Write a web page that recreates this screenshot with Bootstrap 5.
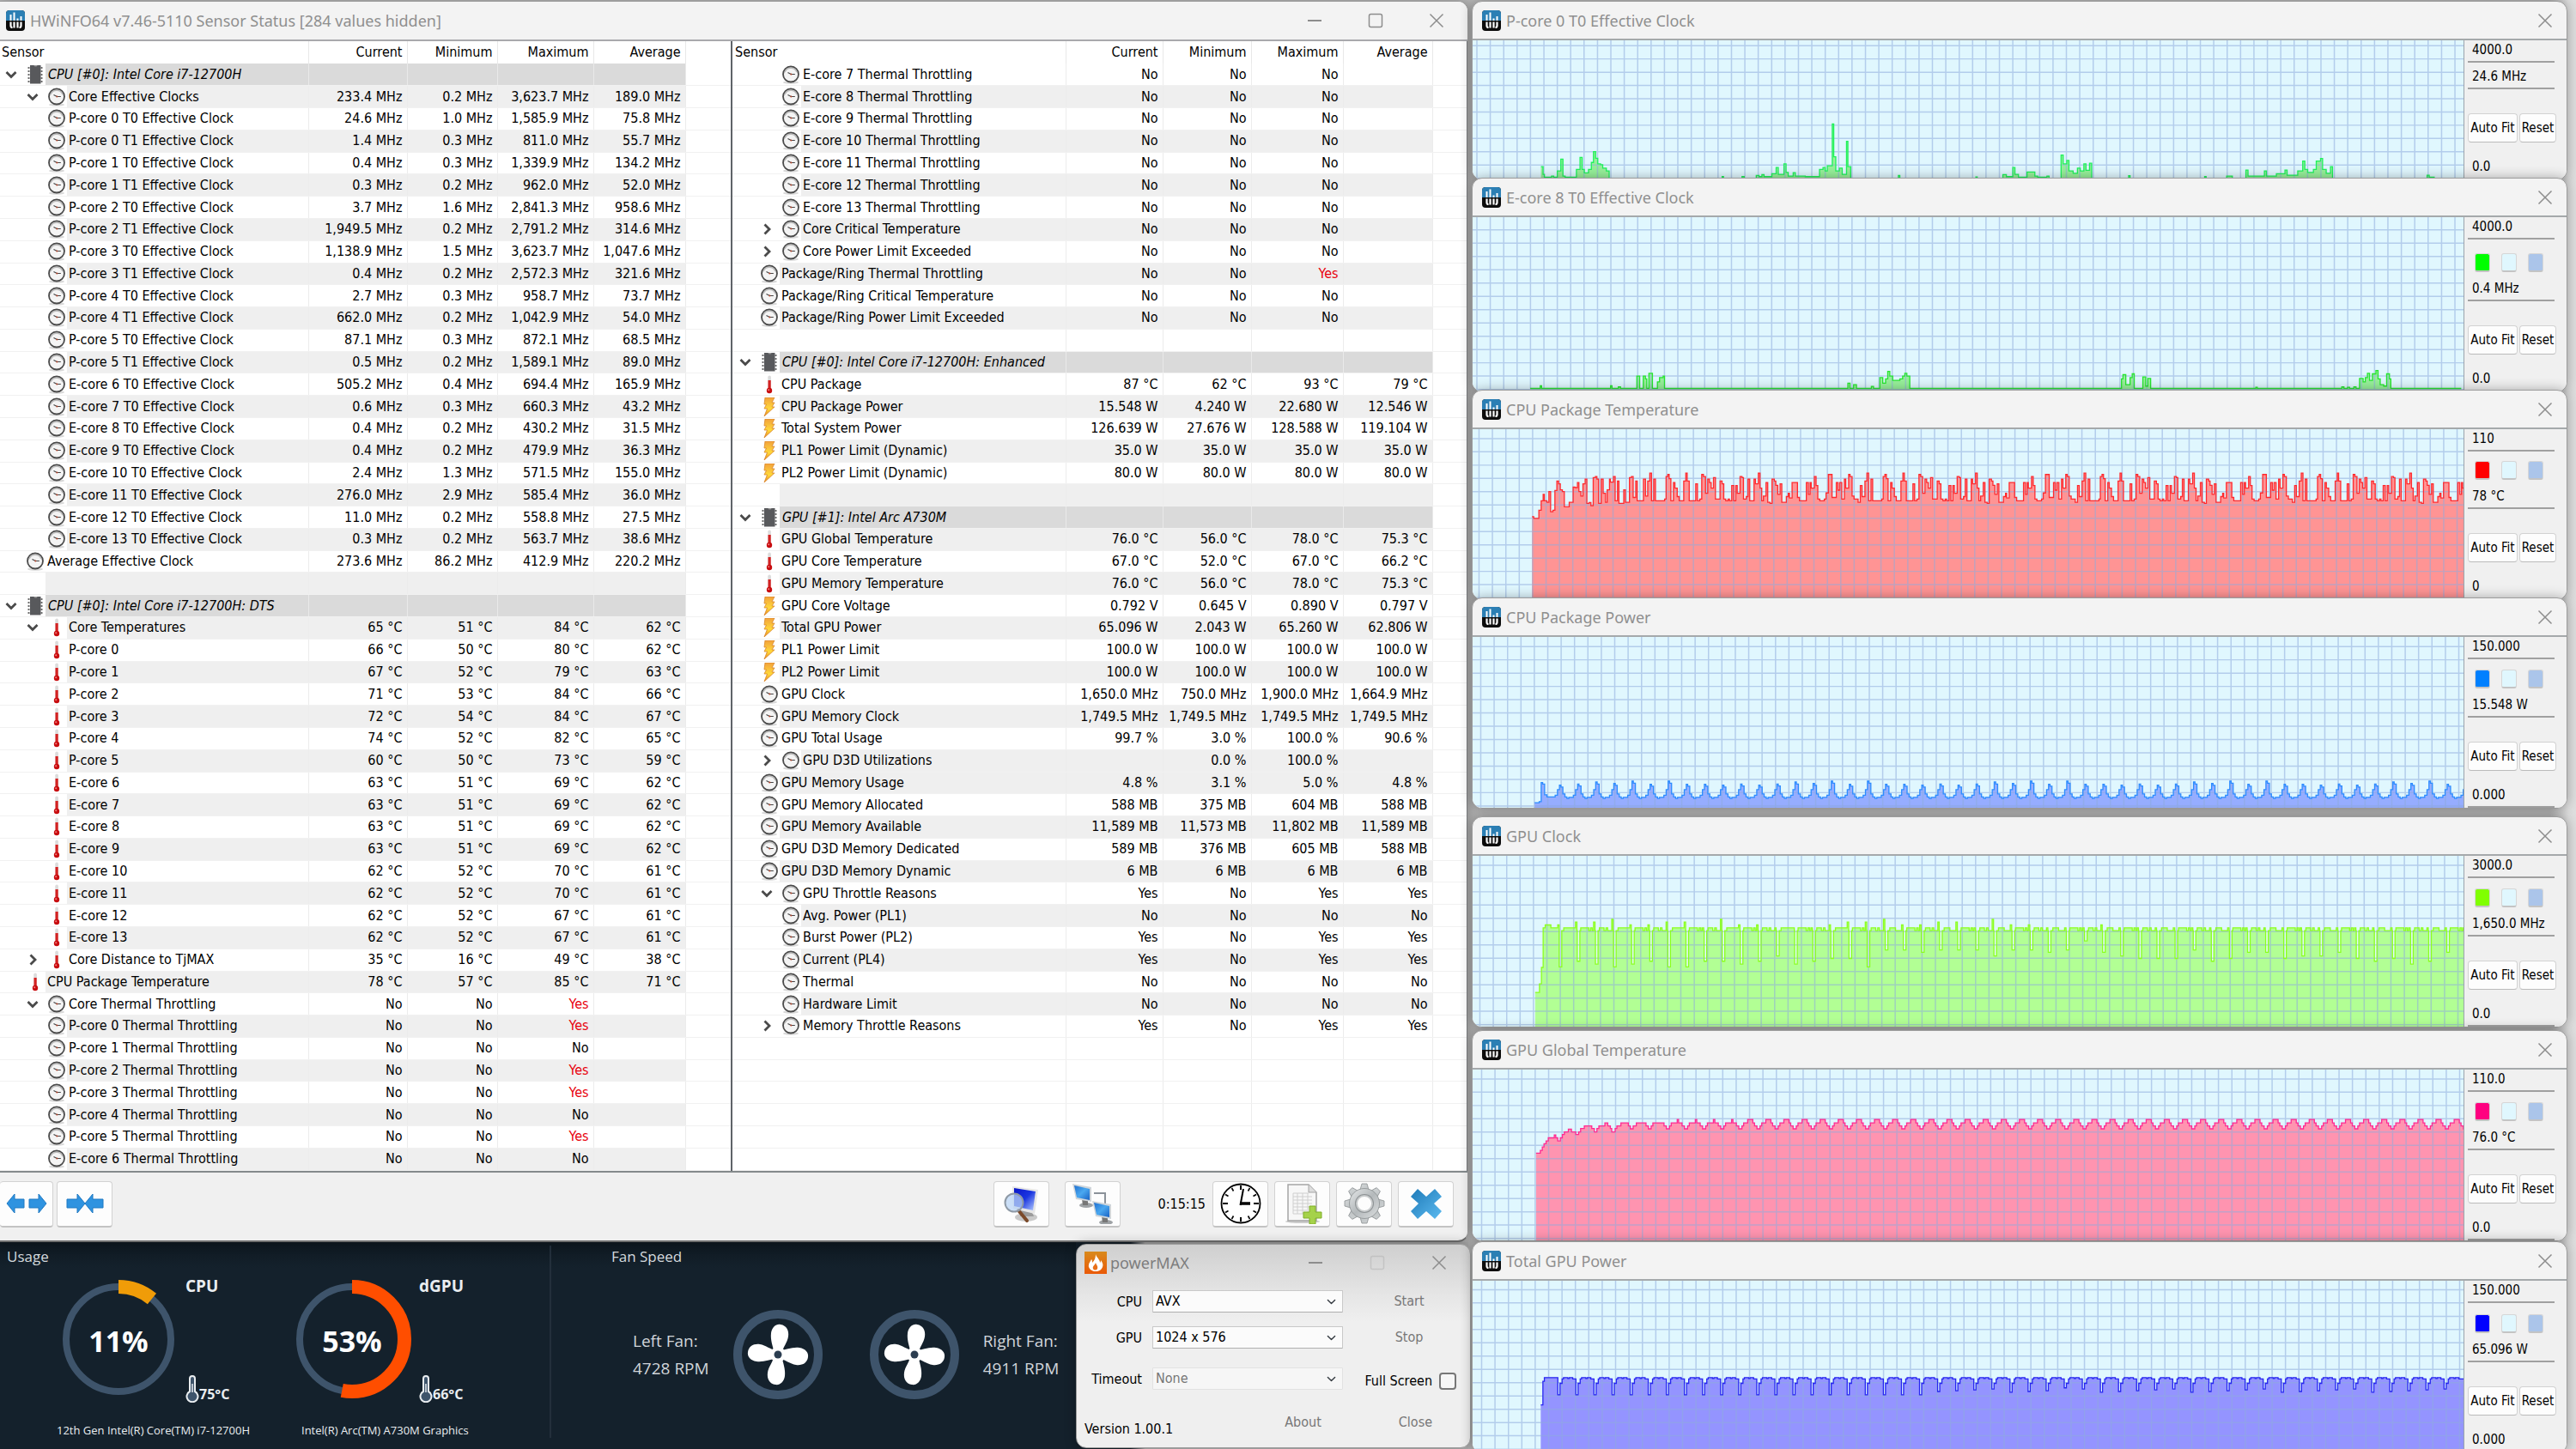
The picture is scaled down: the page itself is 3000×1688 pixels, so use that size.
<!DOCTYPE html>
<html lang="en">
<head>
<meta charset="utf-8">
<meta name="viewport" content="width=device-width, initial-scale=1">
<title>HWiNFO64 Sensor Status</title>
<link href="https://cdn.jsdelivr.net/npm/bootstrap@5.3.0/dist/css/bootstrap.min.css" rel="stylesheet">
<style>
:root{--ui:"DejaVu Sans Condensed","Noto Sans",sans-serif;--title:"Noto Sans","Open Sans",sans-serif;--row:#efefef;--head:#dadada}
body{margin:0;background:#b9b9b9;font-family:var(--ui);font-size:16px;line-height:20px;color:#000;overflow:hidden}
button{font-family:inherit}
.desk{display:grid;grid-template-columns:minmax(0,57fr) minmax(0,43fr);min-height:100vh;padding-top:1px;background:linear-gradient(90deg,#b9b9b9 0 99%,#dedede 99.7%)}
.win{background:#f3f3f3;border:1px solid #9c9c9c;border-radius:12px;overflow:hidden;position:relative;box-shadow:0 0 14px rgba(0,0,0,.3)}
.win-title{font-family:var(--title);font-size:18px;color:#8f8f8f;height:43px;padding-left:11px}
.win-title .app-logo{width:22px;height:24px;margin-right:6px}
.ctl{width:71px;height:43px;padding:0;border:0;background:none;color:#8d8d8d;display:flex;align-items:center;justify-content:center}
.ctl svg{width:18px;height:18px}
/* sensor window */
.main-win{border-left:0;border-radius:0 12px 12px 0;width:100%;background:#f0f0f0;border-bottom:2px solid #6f6f6f}
.main-win .win-title{background:#f3f3f3;padding-left:7px;height:44px}
.main-win .ctl:last-child{width:72px}
.panes{border-top:2px solid #a9a9ad;border-bottom:2px solid #848a8c;background:#fff}
.pane-l{flex:853 1 0;min-width:0}
.pane-r{flex:857 1 0;min-width:0;border-left:2px solid #5f6368;border-right:1px solid #77797c}
.sensors{width:100%;height:1316px;table-layout:fixed;border-collapse:collapse;color:#000}
.sensors th{font-weight:400;height:26px;padding:0 5px 0 0;text-align:right;border-right:1px solid #e8e8e8}
.sensors th:first-child{text-align:left;padding-left:2px}
.pane-r .sensors th:first-child{padding-left:3px}
.sensors th:last-child,.sensors td:last-child{border-right:0}
.sensors td{height:25px;padding:0 5px 0 0;text-align:right;white-space:nowrap;border-right:1px solid #ececec;border-bottom:1px solid #f1f1f1;line-height:20px}
.sensors td:first-child{text-align:left;padding:0}
.sensors .shade td:not(:last-child){background:var(--row)}
.sensors .group td:not(:last-child){background:var(--head);border-right-color:#e9e9e9}
.sensors .lv0 td:first-child{background:linear-gradient(90deg,#fff 53px,var(--c) 53px)}
.sensors .lv1 td:first-child{background:linear-gradient(90deg,#fff 78px,var(--c) 78px)}
.pane-r .sensors .lv0 td:first-child{background:linear-gradient(90deg,#fff 55px,var(--c) 55px)}
.pane-r .sensors .lv1 td:first-child{background:linear-gradient(90deg,#fff 80px,var(--c) 80px)}
.sensors tr{--c:#fff}.sensors tr.shade{--c:var(--row)}.sensors tr.group{--c:var(--head)}
.pane-r .sensors td .nm{padding-left:2px}
.nm{display:flex;align-items:center;height:24px}
.nm svg{width:20px;height:22px;flex:none}
.nm .chev{width:14px;height:14px;margin:0 11px 0 6px}
.nm .blank{width:31px;flex:none}
.nm .in{width:25px;flex:none}
.nm span{padding-left:4px}
.group .nm span{font-style:italic;padding-left:5px}
.hot{color:#e8000b}
.tools{height:79px;padding:0 16px 6px 0}
.tools .btn{width:65px;height:54px;padding:0;background:#fdfdfd;border:1px solid #d2d2d2;border-bottom:2px solid #c3c3c3;border-radius:4px}
.tools .btn.edge{width:62px;border-left:0}
.tools .right-set{gap:7px}
.tools .gap-net{margin:0 16px 0 18px}
.tools svg{width:48px;height:48px}
/* usage strip */
.strip{background:linear-gradient(90deg,transparent 77%,#b5b5b5 78%),#14202b}
.usage{background:linear-gradient(#0e1820,#14212c 30px);color:#e9edf0;font-family:"Open Sans","Noto Sans",sans-serif;height:240px;min-width:0}
.usage .half-l{flex:641 1 0;margin:4px 0 12px;border-right:2px solid #232f3b}
.usage .half-r{flex:612 1 0;margin:4px 0 12px}
.cap{font-size:17px;line-height:22px;padding-top:2px;color:#d5dade}
.gauge{margin-top:11px;padding-left:67px}
.gauge .ring{width:142px;height:142px;margin-top:3px}
.gauge .facts{font-weight:700;margin-left:7px;height:148px;min-width:123px}
.facts .who{font-size:19px;line-height:24px}
.facts .deg{font-size:16px;line-height:20px}
.facts svg{width:16px;height:32px}
.chipname{font-size:13px;line-height:18px;color:#e9edf0;white-space:nowrap;gap:60px;padding-left:66px}
.fans{margin-top:50px;padding-left:95px;gap:27px}
.fan{width:106px;height:106px;flex:none}
.fan+.fan{margin-left:26px}
.rpm{font-size:19px;line-height:32px;color:#d0d5da;white-space:nowrap}
/* powerMAX */
.pm{width:460px;flex:none;height:238px;margin-top:2px;margin-right:-3px;background:linear-gradient(#cfcfcf,#e6e6e6 60px,#efefef 90px)}
.pm .win-title{height:42px;padding-left:9px;background:none;color:#7d7d7d}
.pm .win-title svg.flame{width:26px;height:26px;margin-right:4px}
.pm .ctl{width:72px;height:42px}
.pm .fields{display:grid;grid-template-columns:76px 222px 1fr;column-gap:12px;padding:11px 16px 0 0}
.pm label{white-space:nowrap}
.pm .form-select{height:26px;padding:0 24px 0 3px;font-size:16px;line-height:22px;border-radius:1px;border:1px solid #c9c9c9;border-bottom-color:#b0b0b0;color:#000;background-color:#fbfbfb;background-size:11px 11px;background-position:right 7px center}
.pm .form-select:disabled{color:#777;background-color:#f6f6f6;border-color:#e2e2e2}
.pm .flat{border:0;background:none;padding:0;color:#777;line-height:26px}
.pm .fields .flat{margin-right:-10px}
.pm .form-check-input{width:20px;height:20px;margin:0 0 0 8px;border:2px solid #777;border-radius:4px;background:#f6f6f6}
/* graph windows */
.graphs{padding-left:4px;padding-right:10px}
.graphs .win-title .ctl{width:50px}
.plot-row{border-top:2px solid #a5a9ab;background:#f0f0f0}
.plot{flex:1 1 0;min-width:0;border-right:1px solid #9aa4ab;background:#e0f7fe}
.plot svg{display:block;width:100%;height:100%}
.side{width:119px;flex:none;padding:0 13px 0 4px}
.box{height:26px;line-height:23px;padding-left:5px;border-bottom:2px solid #a0a0a0;background:#f0f0f0;font-size:15px;white-space:nowrap;width:101px}
.sw{width:18px;height:22px;padding:0;border:1px solid #d6d6d6;border-bottom:2px solid #c4c4c4;border-radius:3px}
.sbtn{height:34px;padding:0;background:#fdfdfd;border:1px solid #d2d2d2;border-bottom-color:#bbb;border-radius:4px;font-size:15px;line-height:20px;white-space:nowrap}
</style>
</head>
<body>
<svg width="0" height="0" class="position-absolute" aria-hidden="true">
<defs>
<linearGradient id="gScr" x2="1" y2="1"><stop offset="0" stop-color="#0a16c8"/><stop offset=".5" stop-color="#1a35e0"/><stop offset="1" stop-color="#b8d0ff"/></linearGradient>
<linearGradient id="gScr2" x2="1" y2="1"><stop offset="0" stop-color="#1f6fd0"/><stop offset=".5" stop-color="#4aa8f0"/><stop offset="1" stop-color="#1a62c4"/></linearGradient>
<linearGradient id="gX" x2="1" y2="1"><stop offset="0" stop-color="#1e7ab8"/><stop offset="1" stop-color="#5cbaf0"/></linearGradient>
<linearGradient id="gGear" x2="1" y2="1"><stop offset="0" stop-color="#e6e8e9"/><stop offset=".5" stop-color="#b4b9bb"/><stop offset="1" stop-color="#dcdfe0"/></linearGradient>
<linearGradient id="gBolt" x2="0" y2="1"><stop offset="0" stop-color="#f2a13c"/><stop offset=".6" stop-color="#ffd93a"/><stop offset="1" stop-color="#e8861c"/></linearGradient>
<linearGradient id="gFire" x2="0" y2="1"><stop offset="0" stop-color="#d98a1c"/><stop offset="1" stop-color="#ea5a08"/></linearGradient>
<symbol id="i-logo" viewBox="0 0 22 24"><rect width="22" height="24" rx="4" fill="#0c0c0c"/><path d="M0 12V4a4 4 0 0 1 4-4h14a4 4 0 0 1 4 4v8z" fill="#2b7fb4"/><path d="M5.500 12V5M9.500 12V2.500M13.500 12V9.500M17.500 12V7" stroke="#fff" stroke-width="2"/><path d="M5.500 13.500v4.500a2 2 0 0 0 2 2M9.500 13.500v7M13.500 13.500v7M17.500 13.500v4.500a2 2 0 0 1-2 2" stroke="#fff" stroke-width="2.200" fill="none"/></symbol>
<symbol id="i-clock" viewBox="0 0 20 22"><ellipse cx="10" cy="20" rx="9" ry="1.800" fill="#d9d9d9"/><circle cx="10" cy="10.500" r="9" fill="#f4f4f4" stroke="#4a4a4a" stroke-width="1.800"/><path d="M3 8a7.500 7.500 0 0 1 14 0" stroke="#bbb" stroke-width="1.500" fill="none"/><path d="M6.500 8.500l3.800 2h4.500" stroke="#444" stroke-width="1.200" fill="none"/><circle cx="10.300" cy="10.500" r="1" fill="#b5472f"/></symbol>
<symbol id="i-temp" viewBox="0 0 20 22"><rect x="8.300" y=".500" width="3.600" height="17" rx="1.800" fill="#dcdcdc"/><rect x="8.500" y="6" width="3.200" height="12" fill="#d42222"/><circle cx="10" cy="18" r="3.200" fill="#c80d10"/><circle cx="9.200" cy="17.200" r="1" fill="#f08080"/></symbol>
<symbol id="i-bolt" viewBox="0 0 20 22"><path d="M5 0h11l-3 6h3l-3 5h3L4 22l3.500-9H4l2.500-5H4z" fill="url(#gBolt)" stroke="#d8842a" stroke-width=".800"/></symbol>
<symbol id="i-chip" viewBox="0 0 20 22"><path d="M1.500 3h17M1.500 7h17M1.500 11h17M1.500 15h17M1.500 19h17" stroke="#6d6d6d" stroke-width="2" stroke-dasharray="2 13 2"/><rect x="4" y="0" width="12.500" height="21.500" fill="#58595c"/><path d="M8.500 0a2 1.500 0 0 0 4 0" fill="#9a9a9a"/></symbol>
<symbol id="i-down" viewBox="0 0 14 14"><path d="M1.500 4L7 9.500 12.500 4" fill="none" stroke="#4a4a4a" stroke-width="2.800"/></symbol>
<symbol id="i-right" viewBox="0 0 14 14"><path d="M4.500 1.500L10 7l-5.500 5.500" fill="none" stroke="#4a4a4a" stroke-width="2.800"/></symbol>
<symbol id="i-x" viewBox="0 0 18 18"><path d="M1.500 1.500l15 15M16.500 1.500l-15 15" stroke="currentColor" stroke-width="1.500"/></symbol>
<symbol id="i-min" viewBox="0 0 18 18"><path d="M1 9h16" stroke="currentColor" stroke-width="1.800"/></symbol>
<symbol id="i-max" viewBox="0 0 18 18"><rect x="1.500" y="1.500" width="15" height="15" rx="2" fill="none" stroke="currentColor" stroke-width="1.500"/></symbol>
<symbol id="i-fan" viewBox="0 0 106 106"><circle cx="53" cy="53" r="47" fill="none" stroke="#3e546b" stroke-width="10"/><g fill="#fff"><path id="bl" d="M49 52C47 43 44 36 45 28c1-7 6-11 11-10 7 1 10 7 9 14-1 7-6 12-8 20z"/><use href="#bl" transform="rotate(90 53 53)"/><use href="#bl" transform="rotate(180 53 53)"/><use href="#bl" transform="rotate(270 53 53)"/><circle cx="53" cy="53" r="9"/></g><circle cx="53" cy="53" r="4.500" fill="#2b3d50"/></symbol>
<symbol id="i-therm" viewBox="0 0 16 32"><path d="M5 4a3 3 0 0 1 6 0v15a6.500 6.500 0 1 1-6 0z" fill="#3e546b" stroke="#e9edf0" stroke-width="2"/><path d="M8 10v10" stroke="#e9edf0" stroke-width="1.500"/></symbol>
</defs>
</svg>

<main class="desk">
  <div class="d-flex flex-column">
    <section class="win main-win">
      <header class="win-title d-flex align-items-center">
        <svg class="app-logo"><use href="#i-logo"/></svg><span class="me-auto">HWiNFO64 v7.46-5110 Sensor Status [284 values hidden]</span>
        <button class="ctl" aria-label="Minimize"><svg><use href="#i-min"/></svg></button>
        <button class="ctl" aria-label="Maximize"><svg><use href="#i-max"/></svg></button>
        <button class="ctl" aria-label="Close"><svg><use href="#i-x"/></svg></button>
      </header>
      <div class="panes d-flex">
        <div class="pane-l"><table class="sensors" id="sensorsLeft"><colgroup><col style="width:359px"><col style="width:115px"><col style="width:105px"><col style="width:112px"><col style="width:107px"><col></colgroup></table></div>
        <div class="pane-r"><table class="sensors" id="sensorsRight"><colgroup><col style="width:388px"><col style="width:113px"><col style="width:103px"><col style="width:107px"><col style="width:104px"><col></colgroup></table></div>
      </div>
      <div class="tools d-flex align-items-center">
        <button class="btn edge" aria-label="Expand columns"><svg viewBox="0 0 48 48"><path d="M1 24l9-11v6h11v10H10v6zM47 24l-9-11v6H27v10h11v6z" fill="#2f93e0" stroke="#1f78c2"/></svg></button>
        <button class="btn me-auto ms-1" aria-label="Shrink columns"><svg viewBox="0 0 48 48"><path d="M24 24l-9-11v6H3v10h12v6zM24 24l9-11v6h12v10H33v6z" fill="#2f93e0" stroke="#1f78c2"/></svg></button>
        <button class="btn" aria-label="Inspect"><svg viewBox="0 0 48 48"><ellipse cx="30" cy="40" rx="13" ry="5" fill="#c9c9c9"/><path d="M24 32h12l3 7H23z" fill="#9b9b9b"/><path d="M14 4l30 4-4 28-25-6z" fill="#e6e6e6"/><path d="M16 6l25 4-3 22-22-5z" fill="url(#gScr)"/><path d="M21 32l10 12" stroke="#7b4a2a" stroke-width="4" stroke-linecap="round"/><circle cx="16" cy="23" r="10.500" fill="#b9d4f4" fill-opacity=".75" stroke="#8f9aa6" stroke-width="2"/></svg></button>
        <button class="btn gap-net" aria-label="Network"><svg viewBox="0 0 48 48"><path d="M26 12h13v16" fill="none" stroke="#8b9299" stroke-width="2"/><g id="mon"><ellipse cx="17" cy="26" rx="8" ry="3" fill="#9ea2a5"/><path d="M12 19h7v7h-6z" fill="#777"/><path d="M1 1l22 4v17L5 19z" fill="#cfd5da"/><path d="M3 3l18 4v13L6 17z" fill="url(#gScr2)"/></g><use href="#mon" x="23" y="20"/></svg></button>
        <span class="ms-4 ps-1 me-2">0:15:15</span>
        <div class="right-set d-flex">
        <button class="btn" aria-label="Reset timer"><svg viewBox="0 0 48 48"><circle cx="24" cy="24" r="22.500" fill="#fff" stroke="#000" stroke-width="1.800"/><g stroke="#000" stroke-width="2"><path d="M24 3v5M24 40v5M3 24h6M39 24h6"/><path d="M13.500 6l2 3.500M34.500 6l-2 3.500M6 13.500l3.500 2M42 13.500l-3.500 2M6 34.500l3.500-2M42 34.500l-3.500-2M13.500 42l2-3.500M34.500 42l-2-3.500" stroke-width="1.600"/></g><path d="M23.500 26L27 7" stroke="#000" stroke-width="2"/><path d="M23 24h12" stroke="#000" stroke-width="3.500"/></svg></button>
        <button class="btn" aria-label="Add log"><svg viewBox="0 0 48 48"><ellipse cx="24" cy="45" rx="20" ry="2" fill="#ccc"/><path d="M7 2h24l9 9v33H7z" fill="#f7f7f7" stroke="#a5a5a5" stroke-width="1.500"/><path d="M31 2v9h9" fill="#ddd" stroke="#a5a5a5"/><path d="M13 12h18M13 16h22M13 20h22M13 24h22M13 28h22M13 32h16M13 36h16M13 12v24M18 12v24M24 12v24M30 12v24" stroke="#cfcfcf"/><path d="M32 27h7v7h7v7h-7v7h-7v-7h-7v-7h7z" fill="#a5d24a" stroke="#7fae28"/></svg></button>
        <button class="btn" aria-label="Settings"><svg viewBox="0 0 48 48"><g fill="url(#gGear)" stroke="#8b9092" stroke-width=".800"><path id="t8" d="M19 8l2-7h6l2 7zM19 40l2 7h6l2-7zM8 19l-7 2v6l7 2zM40 19l7 2v6l-7 2z"/><use href="#t8" transform="rotate(45 24 24)"/><circle cx="24" cy="24" r="17.500"/></g><circle cx="24" cy="24" r="11" fill="#8e9395"/><circle cx="24" cy="24" r="9" fill="#fdfdfd" stroke="#c8cbcc" stroke-width="2"/></svg></button>
        <button class="btn" aria-label="Close sensors"><svg viewBox="0 0 48 48"><path d="M14 7l10 9 10-9 8 9-9 8 9 9-8 9-10-9-10 9-8-9 9-9-9-8z" fill="url(#gX)"/></svg></button>
        </div>
      </div>
    </section>
    <div class="strip d-flex flex-grow-1">
      <section class="usage d-flex flex-grow-1">
        <div class="half-l d-flex flex-column">
          <div class="cap ps-2">Usage</div>
          <div class="d-flex gauge">
            <svg class="ring" id="g1" viewBox="0 0 142 142"></svg>
            <div class="facts d-flex flex-column justify-content-between"><span class="who">CPU</span><span class="deg d-flex align-items-end"><svg><use href="#i-therm"/></svg>75°C</span></div>
            <svg class="ring" id="g2" viewBox="0 0 142 142"></svg>
            <div class="facts d-flex flex-column justify-content-between"><span class="who">dGPU</span><span class="deg d-flex align-items-end"><svg><use href="#i-therm"/></svg>66°C</span></div>
          </div>
          <div class="d-flex chipname mt-auto"><span>12th Gen Intel(R) Core(TM) i7-12700H</span><span>Intel(R) Arc(TM) A730M Graphics</span></div>
        </div>
        <div class="half-r d-flex flex-column">
          <div class="cap" style="padding-left:70px">Fan Speed</div>
          <div class="d-flex align-items-center fans">
            <div class="rpm">Left Fan:<br>4728 RPM</div>
            <svg class="fan"><use href="#i-fan"/></svg>
            <svg class="fan"><use href="#i-fan"/></svg>
            <div class="rpm">Right Fan:<br>4911 RPM</div>
          </div>
        </div>
      </section>
      <section class="win pm">
        <header class="win-title d-flex align-items-center">
          <svg class="flame" viewBox="0 0 26 26"><rect width="26" height="26" fill="url(#gFire)"/><path d="M13 3c1 4 5 6 5 10 1-1 1-2 1-3 2 3 3 5 2 8-1 3-4 5-8 5s-7-2-8-5c-1-4 2-6 3-9 1 1 1 2 1 4 3-3 4-6 4-10z" fill="#fff"/><path d="M13 13c1 3 3 4 2 7-1 2-4 2-5 0-1-3 2-4 3-7z" fill="#e8701a"/></svg><span class="me-auto">powerMAX</span>
          <button class="ctl" aria-label="Minimize"><svg><use href="#i-min"/></svg></button>
          <button class="ctl opacity-25" disabled aria-label="Maximize"><svg><use href="#i-max"/></svg></button>
          <button class="ctl" aria-label="Close"><svg><use href="#i-x"/></svg></button>
        </header>
        <div class="fields">
          <label class="text-end pt-1" for="cpuSel">CPU</label><select id="cpuSel" class="form-select"><option>AVX</option></select><button class="flat text-center">Start</button>
        </div>
        <div class="fields" style="padding-top:16px">
          <label class="text-end pt-1" for="gpuSel">GPU</label><select id="gpuSel" class="form-select"><option>1024 x 576</option></select><button class="flat text-center">Stop</button>
        </div>
        <div class="fields" style="padding-top:22px">
          <label class="text-end pt-1" for="toSel">Timeout</label><select id="toSel" class="form-select" disabled><option>None</option></select>
          <div class="d-flex align-items-center justify-content-end" style="margin-top:5px"><label for="fs">Full Screen</label><input id="fs" type="checkbox" class="form-check-input"></div>
        </div>
        <div class="d-flex" style="padding:20px 44px 0 9px">
          <span class="me-auto pt-3">Version 1.00.1</span><button class="flat" style="margin-right:90px">About</button><button class="flat">Close</button>
        </div>
      </section>
    </div>
  </div>
  <div class="graphs d-flex flex-column" id="graphs"></div>
</main>

<script>
const M=v=>v.split(' ').map(n=>n+' MHz'), C=v=>v.split(' ').map(n=>n+' °C'), W=v=>v.split(' ').map(n=>n+' W'), P=v=>v.split(' ').map(n=>n==='-'?'':n+' %'), B=v=>v.split(' ').map(n=>n+' MB'), T=v=>v.split(' ').map(n=>n==='-'?'':n);
// [label, level, icon, chevron, values]
const left=[['CPU [#0]: Intel Core i7-12700H',0,'chip','down'],['Core Effective Clocks',1,'clock','down',M('233.4 0.2 3,623.7 189.0')]];
[['P-core 0 T0','24.6 1.0 1,585.9 75.8'],['P-core 0 T1','1.4 0.3 811.0 55.7'],['P-core 1 T0','0.4 0.3 1,339.9 134.2'],['P-core 1 T1','0.3 0.2 962.0 52.0'],['P-core 2 T0','3.7 1.6 2,841.3 958.6'],['P-core 2 T1','1,949.5 0.2 2,791.2 314.6'],['P-core 3 T0','1,138.9 1.5 3,623.7 1,047.6'],['P-core 3 T1','0.4 0.2 2,572.3 321.6'],['P-core 4 T0','2.7 0.3 958.7 73.7'],['P-core 4 T1','662.0 0.2 1,042.9 54.0'],['P-core 5 T0','87.1 0.3 872.1 68.5'],['P-core 5 T1','0.5 0.2 1,589.1 89.0'],['E-core 6 T0','505.2 0.4 694.4 165.9'],['E-core 7 T0','0.6 0.3 660.3 43.2'],['E-core 8 T0','0.4 0.2 430.2 31.5'],['E-core 9 T0','0.4 0.2 479.9 36.3'],['E-core 10 T0','2.4 1.3 571.5 155.0'],['E-core 11 T0','276.0 2.9 585.4 36.0'],['E-core 12 T0','11.0 0.2 558.8 27.5'],['E-core 13 T0','0.3 0.2 563.7 38.6']].forEach(r=>left.push([r[0]+' Effective Clock',1,'clock','',M(r[1])]));
left.push(['Average Effective Clock',0,'clock','',M('273.6 86.2 412.9 220.2')],['',0],['CPU [#0]: Intel Core i7-12700H: DTS',0,'chip','down'],['Core Temperatures',1,'temp','down',C('65 51 84 62')]);
[['P-core 0','66 50 80 62'],['P-core 1','67 52 79 63'],['P-core 2','71 53 84 66'],['P-core 3','72 54 84 67'],['P-core 4','74 52 82 65'],['P-core 5','60 50 73 59'],['E-core 6','63 51 69 62'],['E-core 7','63 51 69 62'],['E-core 8','63 51 69 62'],['E-core 9','63 51 69 62'],['E-core 10','62 52 70 61'],['E-core 11','62 52 70 61'],['E-core 12','62 52 67 61'],['E-core 13','62 52 67 61']].forEach(r=>left.push([r[0],1,'temp','',C(r[1])]));
left.push(['Core Distance to TjMAX',1,'temp','right',C('35 16 49 38')],['CPU Package Temperature',0,'temp','',C('78 57 85 71')],['Core Thermal Throttling',1,'clock','down',T('No No !Yes -')]);
[['P-core 0','!Yes'],['P-core 1','No'],['P-core 2','!Yes'],['P-core 3','!Yes'],['P-core 4','No'],['P-core 5','!Yes'],['E-core 6','No']].forEach(r=>left.push([r[0]+' Thermal Throttling',1,'clock','',T('No No '+r[1]+' -')]));
const right=[];
for(let i=7;i<14;i++)right.push(['E-core '+i+' Thermal Throttling',1,'clock','',T('No No No -')]);
right.push(['Core Critical Temperature',1,'clock','right',T('No No No -')],['Core Power Limit Exceeded',1,'clock','right',T('No No No -')],
['Package/Ring Thermal Throttling',0,'clock','',T('No No !Yes -')],['Package/Ring Critical Temperature',0,'clock','',T('No No No -')],['Package/Ring Power Limit Exceeded',0,'clock','',T('No No No -')],['',0],
['CPU [#0]: Intel Core i7-12700H: Enhanced',0,'chip','down'],['CPU Package',0,'temp','',C('87 62 93 79')],['CPU Package Power',0,'bolt','',W('15.548 4.240 22.680 12.546')],['Total System Power',0,'bolt','',W('126.639 27.676 128.588 119.104')],['PL1 Power Limit (Dynamic)',0,'bolt','',W('35.0 35.0 35.0 35.0')],['PL2 Power Limit (Dynamic)',0,'bolt','',W('80.0 80.0 80.0 80.0')],['',0],
['GPU [#1]: Intel Arc A730M',0,'chip','down'],['GPU Global Temperature',0,'temp','',C('76.0 56.0 78.0 75.3')],['GPU Core Temperature',0,'temp','',C('67.0 52.0 67.0 66.2')],['GPU Memory Temperature',0,'temp','',C('76.0 56.0 78.0 75.3')],['GPU Core Voltage',0,'bolt','',['0.792 V','0.645 V','0.890 V','0.797 V']],['Total GPU Power',0,'bolt','',W('65.096 2.043 65.260 62.806')],['PL1 Power Limit',0,'bolt','',W('100.0 100.0 100.0 100.0')],['PL2 Power Limit',0,'bolt','',W('100.0 100.0 100.0 100.0')],
['GPU Clock',0,'clock','',M('1,650.0 750.0 1,900.0 1,664.9')],['GPU Memory Clock',0,'clock','',M('1,749.5 1,749.5 1,749.5 1,749.5')],['GPU Total Usage',0,'clock','',P('99.7 3.0 100.0 90.6')],['GPU D3D Utilizations',1,'clock','right',P('- 0.0 100.0 -')],['GPU Memory Usage',0,'clock','',P('4.8 3.1 5.0 4.8')],['GPU Memory Allocated',0,'clock','',B('588 375 604 588')],['GPU Memory Available',0,'clock','',B('11,589 11,573 11,802 11,589')],['GPU D3D Memory Dedicated',0,'clock','',B('589 376 605 588')],['GPU D3D Memory Dynamic',0,'clock','',B('6 6 6 6')],
['GPU Throttle Reasons',1,'clock','down',T('Yes No Yes Yes')],['Avg. Power (PL1)',1,'clock','',T('No No No No')],['Burst Power (PL2)',1,'clock','',T('Yes No Yes Yes')],['Current (PL4)',1,'clock','',T('Yes No Yes Yes')],['Thermal',1,'clock','',T('No No No No')],['Hardware Limit',1,'clock','',T('No No No No')],['Memory Throttle Reasons',1,'clock','right',T('Yes No Yes Yes')]);
const count=right.length;
while(right.length<50)right.push(['',0]);
const rightShade=i=>i<count&&(i>=32?i%2===0:i%2===1);
function fill(id,rows,shade){
  let h='<thead><tr><th>Sensor</th><th>Current</th><th>Minimum</th><th>Maximum</th><th>Average</th><th></th></tr></thead><tbody>';
  rows.forEach(([name,lv,icon,chev,vals],i)=>{
    const cls=['lv'+lv]; if(icon==='chip')cls.push('group'); else if(shade(i))cls.push('shade');
    const cell=name?`<div class="nm">${lv?'<i class="in"></i>':''}${chev?`<svg class="chev"><use href="#i-${chev}"/></svg>`:'<i class="blank"></i>'}<svg><use href="#i-${icon}"/></svg><span>${name}</span></div>`:'';
    h+=`<tr class="${cls.join(' ')}"><td>${cell}</td>`;
    for(let k=0;k<4;k++){const v=vals?vals[k]:'';h+=v[0]==='!'?`<td class="hot">${v.slice(1)}</td>`:`<td>${v}</td>`;}
    h+='<td></td></tr>';
  });
  document.getElementById(id).insertAdjacentHTML('beforeend',h+'</tbody>');
}
fill('sensorsLeft',left,i=>i%2===1);
fill('sensorsRight',right,rightShade);

// usage rings
function ring(id,pct,color){
  const L=2*Math.PI*61;
  document.getElementById(id).innerHTML=`<circle cx="71" cy="71" r="61" fill="none" stroke="#3e546b" stroke-width="8"/><circle cx="71" cy="71" r="61" fill="none" stroke="${color}" stroke-width="16" stroke-dasharray="${L*pct/100} ${L}" transform="rotate(-90 71 71)"/><text x="71" y="86" text-anchor="middle" fill="#fff" font-size="34" font-weight="700">${pct}%</text>`;
}
ring('g1',11,'#f09c08');ring('g2',53,'#ff4e00');

// graph series: lists of [x, y] steps in plot pixels
const map=(pts,fx,fy)=>pts.map(p=>[fx(p[0]),fy(p[1])]);
const s1=map([[113,585],[116,612],[118,622],[128,618],[131,622],[136,600],[141,558],[144,618],[147,622],[163,595],[168,552],[171,595],[174,607],[180,595],[184,570],[187,532],[190,555],[193,575],[197,578],[200,590],[205,600],[209,624],[368,620],[370,624],[396,620],[399,624],[416,616],[420,620],[424,613],[427,620],[438,610],[444,588],[447,612],[455,575],[458,605],[461,618],[468,606],[471,618],[485,620],[505,595],[510,588],[513,600],[516,582],[523,434],[525,550],[528,600],[533,590],[537,612],[543,495],[545,585],[549,624],[616,616],[618,624],[725,621],[727,624],[763,613],[768,620],[777,588],[780,612],[785,622],[797,604],[808,618],[812,622],[825,618],[828,624],[845,544],[848,575],[853,563],[856,600],[862,608],[868,590],[872,600],[877,575],[880,598],[885,573],[888,624],[940,617],[942,624],[1047,620],[1049,624],[1078,618],[1086,624],[1105,597],[1108,618],[1131,600],[1134,618],[1148,610],[1160,597],[1163,615],[1178,600],[1185,565],[1188,595],[1192,605],[1200,595],[1204,565],[1210,556],[1213,595],[1218,608],[1224,585],[1227,624],[1360,615],[1363,622],[1370,624]],x=>x/1.2062-14,y=>y>623?163:y/3-46);
const s2=map([[98,1363],[112,1354],[114,1363],[211,1354],[213,1363],[222,1358],[225,1363],[248,1320],[252,1363],[257,1320],[260,1330],[262,1363],[265,1310],[270,1363],[277,1340],[280,1325],[285,1320],[287,1363],[545,1345],[548,1363],[553,1350],[557,1363],[578,1356],[581,1363],[590,1325],[594,1345],[598,1330],[601,1303],[604,1320],[608,1335],[618,1330],[622,1320],[625,1310],[628,1320],[632,1363],[930,1330],[932,1315],[936,1350],[942,1325],[945,1312],[948,1363],[960,1323],[964,1355],[967,1328],[971,1363],[1119,1359],[1121,1363],[1240,1358],[1243,1363],[1248,1359],[1251,1363],[1257,1358],[1260,1363],[1265,1328],[1270,1340],[1273,1325],[1276,1310],[1279,1335],[1283,1312],[1288,1300],[1291,1330],[1294,1350],[1299,1355],[1303,1312],[1307,1330],[1309,1363],[1408,1363]],x=>x/1.2062-14,y=>y/3-253);
const redHead=[[40,216],[46,222],[64,193],[72,160],[79,137],[83,160],[92,165],[99,127],[105,198],[113,193],[120,123],[127,90],[133,100],[139,121],[146,127],[153,181],[170,165],[184,111],[190,113],[199,95],[204,127],[211,143],[218,100],[226,83],[232,169],[240,166],[246,177],[254,78],[262,74],[267,83],[273,169],[282,83],[289,133],[297,165],[303,121],[311,83],[314,94],[325,74],[331,160],[339,90],[344,169],[361,121],[367,165],[381,78],[388,74],[394,148],[403,90],[408,160],[430,83],[437,143]];
const redLoop=[[445,90],[452,62],[458,160],[466,83],[472,160],[504,154],[509,74],[515,67],[520,82],[526,160],[535,95],[540,115],[548,145],[555,160],[571,90],[578,62],[583,90],[590,160],[613,100],[619,160],[627,154],[634,67],[640,74],[647,133],[655,83],[661,95],[667,115],[675,78],[682,154],[698,90],[705,100],[711,154],[718,160],[726,154],[731,160],[739,106],[746,160],[753,106],[758,133],[768,74],[775,78],[780,154],[790,145],[796,83],[802,160],[817,83],[822,100],[832,62],[838,115],[844,160],[850,143],[859,95],[865,165],[873,169],[880,83],[888,90],[893,105],[900,137],[908,100],[914,165],[930,145],[937,133],[941,150],[950,95],[969,148],[976,160],[1000,95],[1007,137],[1013,95],[1017,115],[1028,74],[1034,106],[1040,154],[1047,160],[1063,154],[1069,132],[1077,67],[1090,148],[1105,95],[1111,122],[1117,95],[1124,154],[1133,83],[1138,115],[1148,67],[1153,74],[1160,143],[1167,154],[1181,165],[1189,106],[1195,145]];
let s3=[...redHead];for(let k=0;k<4;k++)redLoop.forEach(p=>s3.push([p[0]+760*k,p[1]]));
s3=map(s3,x=>x/3+56,y=>y/3+31);
let s4=[[49,1218],[65,1214],[72,1147],[77,1152],[84,1190],[92,1198]];
const pk=[1156,1152,1145,1150,1142,1153,1142,1153,1153,1156,1152];
for(let k=0;k<51;k++){const o=121+63.4*k,p=pk[k%11];s4.push([o,1192],[o+8,1172],[o+15,p],[o+20,p+7],[o+27,1187],[o+34,1198],[o+41,1203],[o+48,1199]);}
s4=map(s4,x=>x/3+56,y=>y/3-211);
let s5=[[57,290],[72,260],[79,202],[85,62],[92,52],[112,62],[136,52]];
const dips=[392,378,385,392,385,378,392,392,378,378,385,378,365,385,378,371,371,392,350,350,356,350,350,350,365,350,350,356,350,328,356,365,371,371,371,350,378,371,356,356,371,365,365,356,371,378,371,385,378,356,350];
const tips=[42,42,32,52,52,42,42,62,32,52,52,62,62,62,52];
dips.forEach((d,k)=>{const o=141+63.4*k,y=(d/2.096-120.3)*3;s5.push([o,y],[o+9,72]);k%3===0?s5.push([o+16,62],[o+(k<18?56:36),k<18?62:72]):k%3===1?s5.push([o+12,62],[o+40,72],[o+46,62],[o+52,72]):s5.push([o+14,62],[o+30,72],[o+37,62],[o+43,72]);s5.push([o+57,k<30?tips[k%15]:62],[o+62,72]);});
s5=map(s5,x=>x/3+54,y=>y/3+64);
let s6=[[57,850],[72,840],[79,828],[85,817],[92,807],[100,796],[121,786],[126,796],[133,807],[142,796],[149,784],[156,775],[170,765],[181,775],[196,784],[206,775],[213,763],[226,754],[252,763],[261,775],[270,763],[277,754],[298,743],[308,754],[317,763],[322,775],[334,763],[340,754],[354,743],[380,754],[387,764],[397,754],[408,743],[442,754],[450,764],[460,754],[466,743],[505,754]];
for(let k=0;k<45;k++){const o=513+63.4*k,n=k<4;s6.push([o,764],[o+11,754],[o+17,743],[o+(n?38:31),731],[o+(n?43:49),743],[o+55,754]);}
s6=map(s6,x=>x/3+55,y=>y/3-185);
let s7=[[114,1463],[117,1405],[119,1396]];
for(let k=0;k<50;k++){const o=138+25.45*k,d=k===28?1421:k>20?1432-(k%5)*2:1438;s7.push([o,d],[o+3,1410],[o+6,1399],[o+8,1396],[o+14,1398],[o+16,1396],[o+21,1399]);}
s7=map(s7,x=>x/1.2062-15,y=>y/2.096-552);

function chart(s,h,gx,gy,stroke,fillc){
  let g='';
  for(let x=gx;x<1156;x+=15.63)g+=`M${x.toFixed(1)} 0V${h}`;
  for(let y=gy;y<h;y+=15.63)g+=`M0 ${y.toFixed(1)}H1156`;
  s=s.filter(p=>p[0]<1156);
  let d=`M${s[0][0].toFixed(1)} ${s[0][1].toFixed(1)}`;
  s.slice(1).forEach(p=>d+=`H${p[0].toFixed(1)}V${p[1].toFixed(1)}`);
  if(s[s.length-1][1]<h-5)d+='H1156';
  return `<svg viewBox="0 0 1156 ${h}" preserveAspectRatio="none"><path d="${d}V${h}H${s[0][0].toFixed(1)}Z" fill="${fillc}"/><path d="${g}" stroke="rgba(142,171,221,.55)" stroke-width="1.500" fill="none"/><path d="${d}" fill="none" stroke="${stroke}" stroke-width="1.300"/></svg>`;
}
// [title, top of scale, value, bottom of scale, line colour, plot height, gap above, plot]
const graphs=[
 ['P-core 0 T0 Effective Clock','4000.0','24.6 MHz','0.0',null,164,0,chart(s1,164,5,6.3,'#1ef25a','#97f09a')],
 ['E-core 8 T0 Effective Clock','4000.0','0.4 MHz','0.0','#00ff00',205,-3,chart(s2,205,5,15,'#27e62f','#97f09a')],
 ['CPU Package Temperature','110','78 °C','0','#ff0000',200,-3,chart(s3,200,7.5,11,'#ff2a2e','#ff9494')],
 ['CPU Package Power','150.000','15.548 W','0.000','#0080ff',201,-3,chart(s4,201,9.5,11.3,'#2c8cff','#96adff')],
 ['GPU Clock','3000.0','1,650.0 MHz','0.0','#80ff00',201,9,chart(s5,201,8.5,11,'#8cff1e','#b2ff94')],
 ['GPU Global Temperature','110.0','76.0 °C','0.0','#ff0080',201,3,chart(s6,201,10.5,11,'#ff2a92','#ff94b0')],
 ['Total GPU Power','150.000','65.096 W','0.000','#0000ff',202,0,chart(s7,202,10.5,10.5,'#2626f0','#9494ff')]];
document.getElementById('graphs').innerHTML=graphs.map(([t,top,val,bot,col,h,gap,svg])=>`<section class="win" style="margin-top:${gap}px"><header class="win-title d-flex align-items-center"><svg class="app-logo"><use href="#i-logo"/></svg><span class="me-auto">${t}</span><button class="ctl" aria-label="Close ${t}"><svg><use href="#i-x"/></svg></button></header>
<div class="plot-row d-flex" style="height:${h}px"><div class="plot">${svg}</div><div class="side d-flex flex-column"><div class="box">${top}</div><div class="flex-grow-1"></div>${col?`<div class="d-flex ps-2 mb-2" style="gap:13px;padding-top:8px"><button class="sw" style="background:${col}" aria-label="Line colour"></button><button class="sw" style="background:#e0f7fe" aria-label="Background colour"></button><button class="sw" style="background:#abc5ea" aria-label="Grid colour"></button></div>`:''}<div class="box">${val}</div><div class="d-flex" style="margin-top:28px;width:103px;gap:2px"><button class="sbtn" style="width:58px">Auto Fit</button><button class="sbtn" style="width:43px">Reset</button></div><div class="box" style="margin-top:17px">${bot}</div></div></div></section>`).join('');
</script>
<script src="https://cdn.jsdelivr.net/npm/bootstrap@5.3.0/dist/js/bootstrap.bundle.min.js"></script>
</body>
</html>
